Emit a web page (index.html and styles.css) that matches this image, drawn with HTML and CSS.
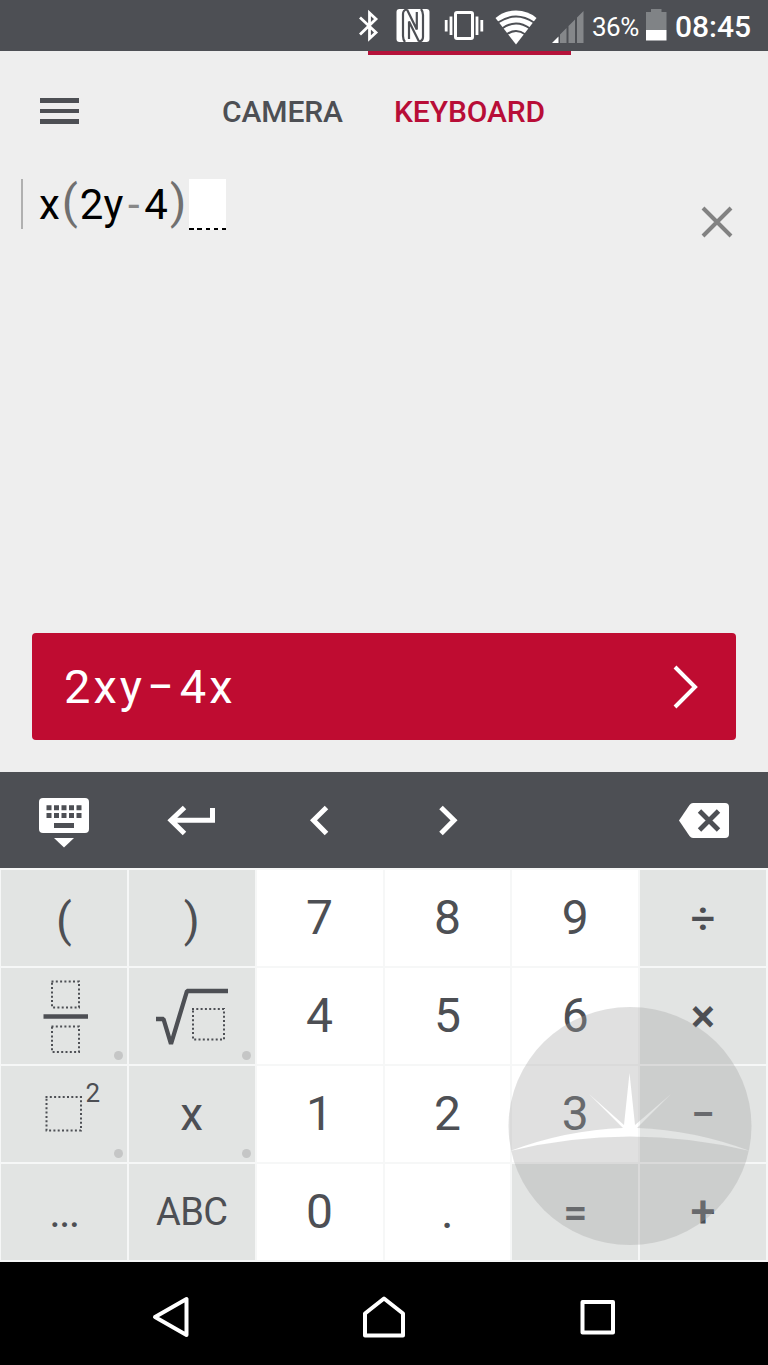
FILE: index.html
```html
<!DOCTYPE html>
<html lang="en">
<head>
    <meta charset="UTF-8">
    <meta name="viewport" content="width=device-width, initial-scale=1.0">
    <title>Calculator</title>
    <link rel="stylesheet" href="styles.css">
</head>
<body>
    <div class="status-bar">
        <svg class="bluetooth" width="24" height="51" viewBox="0 0 24 51" fill="none" stroke="#fff" stroke-width="2.8">
            <path d="M3 17.500L19 32.500L12.500 38.500V13L19 19L3 34.500"/>
        </svg>
        <svg class="nfc" width="34" height="51" viewBox="0 0 34 51">
            <rect x="0.5" y="9" width="33" height="33" rx="3" fill="#fff"/>
            <path d="M11 9.500Q7 10 7 14V36Q7 39.500 9 42M11 9.500L20.800 29.500V12M23 41.500L13 21.500V39M23 41.500Q27 41 27 37V15Q27 11.500 25 9" fill="none" stroke="#4d4f54" stroke-width="2.200" stroke-linejoin="bevel"/>
        </svg>
        <svg class="vibrate" width="40" height="51" viewBox="0 0 40 51" fill="none" stroke="#fff">
            <rect x="11.500" y="12.500" width="17" height="26" rx="1.500" stroke-width="3"/>
            <path d="M7 16.500V35M33 16.500V35M2.200 20V31.500M37.800 20V31.500" stroke-width="2.800"/>
        </svg>
        <svg class="wifi" width="42" height="51" viewBox="0 0 42 51">
            <path d="M21 44.500L0.500 18Q9 10.500 21 10.500T41.500 18Z" fill="#fff"/>
            <path d="M3 22.500Q21 10.500 39 22.500M7 28.500Q21 18.500 35 28.500M11.500 34.500Q21 27.500 30.500 34.500" fill="none" stroke="#4d4f54" stroke-width="2"/>
        </svg>
        <svg class="signal" width="32" height="51" viewBox="0 0 32 51">
            <path d="M0 43L6.500 36.500V43Z" fill="#fff"/>
            <path d="M8 43V34.500L14.500 28V43ZM16.500 43V26L23 19.500V43ZM25 43V17.500L31.500 11V43Z" fill="#85878a"/>
        </svg>
        <span class="percent">36%</span>
        <svg class="battery" width="21" height="51" viewBox="0 0 21 51">
            <path d="M0 12H5V9H15.500V12H20.500V30H0Z" fill="#808386"/>
            <path d="M0 30H20.500V40.500H0Z" fill="#fff"/>
        </svg>
        <span class="time">08:45</span>
    </div>

    <div class="workspace">
        <div class="tab-indicator"></div>
        <div class="header">
            <div class="menu"><i></i><i></i><i></i></div>
            <span class="tab camera">CAMERA</span>
            <span class="tab active">KEYBOARD</span>
        </div>
        <div class="editor">
            <div class="formula">
                <span class="var">x</span><span class="paren">(</span><span>2y</span><span class="minus">-</span><span>4</span><span class="paren close">)</span><span class="placeholder"></span>
            </div>
            <svg class="clear" width="32" height="32" viewBox="0 0 32 32" fill="none" stroke="#828282" stroke-width="4">
                <path d="M2 2L30 30M30 2L2 30"/>
            </svg>
        </div>
        <div class="result">
            <div class="answer"><span>2xy</span><span class="minus-sign">−</span><span>4x</span></div>
            <svg width="28" height="44" viewBox="0 0 28 44" fill="none" stroke="#fff" stroke-width="4">
                <path d="M3 2L23 22L3 42"/>
            </svg>
        </div>
    </div>

    <div class="toolbar">
        <span>
            <svg width="50" height="96" viewBox="0 0 50 96">
                <rect y="26" width="50" height="35" rx="4" fill="#fff"/>
                <path d="M15 66H35L25 75.500Z" fill="#fff"/>
                <path d="M7.500 35.800H43M7.500 43.500H43" stroke="#4d4f54" stroke-width="5" stroke-dasharray="5 2.500"/>
                <path d="M15 53.500H35" stroke="#4d4f54" stroke-width="5"/>
            </svg>
        </span>
        <span>
            <svg width="50" height="96" viewBox="0 0 50 96" fill="none" stroke="#fff" stroke-width="5">
                <path d="M17.500 35.500L4 48.300L17.500 61.500M5 48.300H45.500V36"/>
            </svg>
        </span>
        <span>
            <svg width="20" height="96" viewBox="0 0 20 96" fill="none" stroke="#fff" stroke-width="5">
                <path d="M16.500 35.500L3.500 48.300L16.500 61.500"/>
            </svg>
        </span>
        <span>
            <svg width="20" height="96" viewBox="0 0 20 96" fill="none" stroke="#fff" stroke-width="5">
                <path d="M3 35.500L16 48.300L3 61.500"/>
            </svg>
        </span>
        <span></span>
        <span>
            <svg width="50" height="96" viewBox="0 0 50 96">
                <path d="M14 31H46Q50 31 50 35V62Q50 66 46 66H14Q12 66 10.500 64L0 48.500L10.500 33Q12 31 14 31Z" fill="#fff"/>
                <path d="M20.500 39L39.500 58M39.500 39L20.500 58" stroke="#4d4f54" stroke-width="4.800"/>
            </svg>
        </span>
    </div>

    <div class="keypad">
        <div class="key fn bracket">(</div>
        <div class="key fn bracket">)</div>
        <div class="key">7</div>
        <div class="key">8</div>
        <div class="key">9</div>
        <div class="key fn op">÷</div>

        <div class="key fn more">
            <svg width="126" height="96" viewBox="0 0 126 96" fill="none" stroke="#4d4f54">
                <path d="M50.500 13.500H78V39.500H51V13.500M50.500 58.500H78V84H51V58.500" stroke-width="2" stroke-dasharray="2 2.300"/>
                <path d="M42.500 48.500H87" stroke-width="4.500"/>
            </svg>
        </div>
        <div class="key fn more">
            <svg width="126" height="96" viewBox="0 0 126 96" fill="none" stroke="#4d4f54">
                <path d="M27 51H34.500L42 76L58 23H99" stroke-width="4.300" stroke-linejoin="bevel"/>
                <path d="M63 41H95V71.500H64V41" stroke-width="2" stroke-dasharray="2 2.300"/>
            </svg>
        </div>
        <div class="key">4</div>
        <div class="key">5</div>
        <div class="key">6</div>
        <div class="key fn op times">×</div>

        <div class="key fn more">
            <svg width="126" height="96" viewBox="0 0 126 96">
                <path d="M44.500 31H80V64.500H45.500V31" fill="none" stroke="#4d4f54" stroke-width="2" stroke-dasharray="2 2.300"/>
                <text class="exponent" x="84.500" y="36">2</text>
            </svg>
        </div>
        <div class="key fn more letter">x</div>
        <div class="key">1</div>
        <div class="key">2</div>
        <div class="key">3</div>
        <div class="key fn op">−</div>

        <div class="key fn dots">...</div>
        <div class="key fn abc">ABC</div>
        <div class="key">0</div>
        <div class="key">.</div>
        <div class="key fn op">=</div>
        <div class="key fn op plus">+</div>

        <!-- sunrise badge floating over the keys -->
        <svg class="badge" width="244" height="240" viewBox="0 0 244 240">
            <defs>
                <mask id="sunrise">
                    <ellipse cx="122" cy="120" rx="121.500" ry="119" fill="#fff"/>
                    <path d="M2 145Q58 124 115 122L81 88L116 119L121.500 67L127 119L163 88L129 122Q186 124 242 145Q122 116 2 145Z" fill="#000"/>
                </mask>
            </defs>
            <rect width="244" height="240" fill="#a0a0a0" fill-opacity="0.330" mask="url(#sunrise)"/>
        </svg>
    </div>

    <div class="nav-bar">
        <svg width="38" height="42" viewBox="0 0 38 42">
            <path d="M4 21L35.500 3V39Z"/>
        </svg>
        <svg width="44" height="42" viewBox="0 0 44 42">
            <path d="M3 39.500V17.500L22 2.500L41 17.500V39.500Z"/>
        </svg>
        <svg width="38" height="42" viewBox="0 0 38 42">
            <path d="M3.500 6H34V36.500H3.500Z"/>
        </svg>
    </div>
</body>
</html>
```
FILE: styles.css
```css
* {
    margin: 0;
    padding: 0;
    box-sizing: border-box;
}

body {
    width: 768px;
    height: 1365px;
    overflow: hidden;
    display: flex;
    flex-direction: column;
    font-family: Roboto, "Noto Sans", sans-serif;
    background: #eeeeee;
    color: #4d4f54;
}

svg {
    display: block;
    flex: none;
}

/* status bar */
.status-bar {
    height: 51px;
    display: flex;
    align-items: center;
    padding-left: 357px;
    background: #4d4f54;
    color: #fff;
}

.nfc {
    margin-left: 15px;
}

.vibrate {
    margin-left: 14px;
}

.wifi {
    margin-left: 11px;
}

.signal {
    margin-left: 15px;
}

.percent {
    width: 54px;
    padding: 2px 0 0 8px;
    font-size: 26px;
    letter-spacing: -0.5px;
    white-space: nowrap;
}

.battery {
    margin-left: 8px;
}

.time {
    margin-left: 8px;
    padding-top: 2px;
    font-size: 30px;
    font-weight: 500;
}

/* editor area */
.workspace {
    height: 721px;
    display: flex;
    flex-direction: column;
}

.tab-indicator {
    width: 203px;
    height: 4px;
    margin-left: 368px;
    background: #b5123a;
}

.header {
    height: 112px;
    display: flex;
    align-items: center;
    padding-left: 40px;
}

.menu {
    width: 39px;
    display: flex;
    flex-direction: column;
    gap: 6px;
}

.menu i {
    height: 4.5px;
    background: #4d4f54;
}

.tab {
    font-size: 30px;
    font-weight: 500;
    letter-spacing: -0.1px;
}

.camera {
    width: 172px;
    margin-left: 143px;
}

.tab.active {
    color: #b80d37;
}

.editor {
    height: 466px;
    display: flex;
    justify-content: space-between;
    align-items: flex-start;
    padding: 12px 35px 0 21px;
}

.formula {
    height: 50px;
    display: flex;
    align-items: center;
    border-left: 2px solid #b0b0b0;
    padding-left: 16px;
    font-size: 42px;
    color: #000;
}

.paren {
    width: 20px;
    padding: 0 0 5px 2px;
    font-size: 47px;
    color: #707070;
}

.close {
    width: 21px;
    padding-left: 2px;
}

.minus {
    color: #888;
    width: 21px;
    text-align: center;
}

.placeholder {
    width: 37px;
    height: 51px;
    background: repeating-linear-gradient(90deg, #000 0 4.500px, #fff 4.500px 8.300px) bottom / 100% 2px no-repeat #fff;
}

.clear {
    margin-top: 27px;
}

.result {
    height: 107px;
    margin: 0 32px;
    display: flex;
    align-items: center;
    justify-content: space-between;
    padding: 0 36px 0 32px;
    border-radius: 4px;
    background: #bf0c31;
    color: #fff;
}

.answer {
    display: flex;
    font-size: 47px;
    letter-spacing: 3px;
}

.minus-sign {
    margin: 0 3px 0 2px;
}

/* keyboard */
.toolbar {
    height: 96px;
    display: grid;
    grid-template-columns: repeat(6, 1fr);
    background: #4d4f54;
}

.toolbar span {
    display: flex;
    justify-content: center;
}

.keypad {
    position: relative;
    height: 394px;
    display: grid;
    grid-template-columns: repeat(6, 1fr);
    grid-template-rows: repeat(4, 1fr);
    gap: 2px;
    padding: 2px 2px 2px 1px;
    background: #f6f7f7;
}

.key {
    position: relative;
    display: flex;
    align-items: center;
    justify-content: center;
    min-width: 0;
    min-height: 0;
    padding-bottom: 1px;
    background: #fff;
    font-size: 48px;
}

.fn {
    background: #e2e4e3;
}

.more {
    padding: 0;
}

.more::after {
    content: "";
    position: absolute;
    right: 4px;
    bottom: 4px;
    width: 9px;
    height: 9px;
    border-radius: 50%;
    background: #c5c6c6;
}

.bracket {
    padding: 3px 0 0;
    font-size: 46px;
}

.op {
    font-size: 43px;
    font-weight: 500;
}

.times {
    font-size: 46px;
}

.plus {
    font-size: 45px;
}

.letter {
    font-size: 46px;
}

.dots {
    font-size: 44px;
    letter-spacing: -1.8px;
}

.exponent {
    font-size: 26px;
    fill: #4d4f54;
}

.abc {
    padding-bottom: 0;
    font-size: 38px;
    letter-spacing: -0.5px;
}

.badge {
    position: absolute;
    left: 508px;
    top: 138px;
}

/* system navigation */
.nav-bar {
    height: 103px;
    display: flex;
    align-items: center;
    justify-content: space-between;
    padding: 6px 151px 0;
    background: #000;
    fill: none;
    stroke: #fff;
    stroke-width: 4;
    stroke-linejoin: round;
}
```
